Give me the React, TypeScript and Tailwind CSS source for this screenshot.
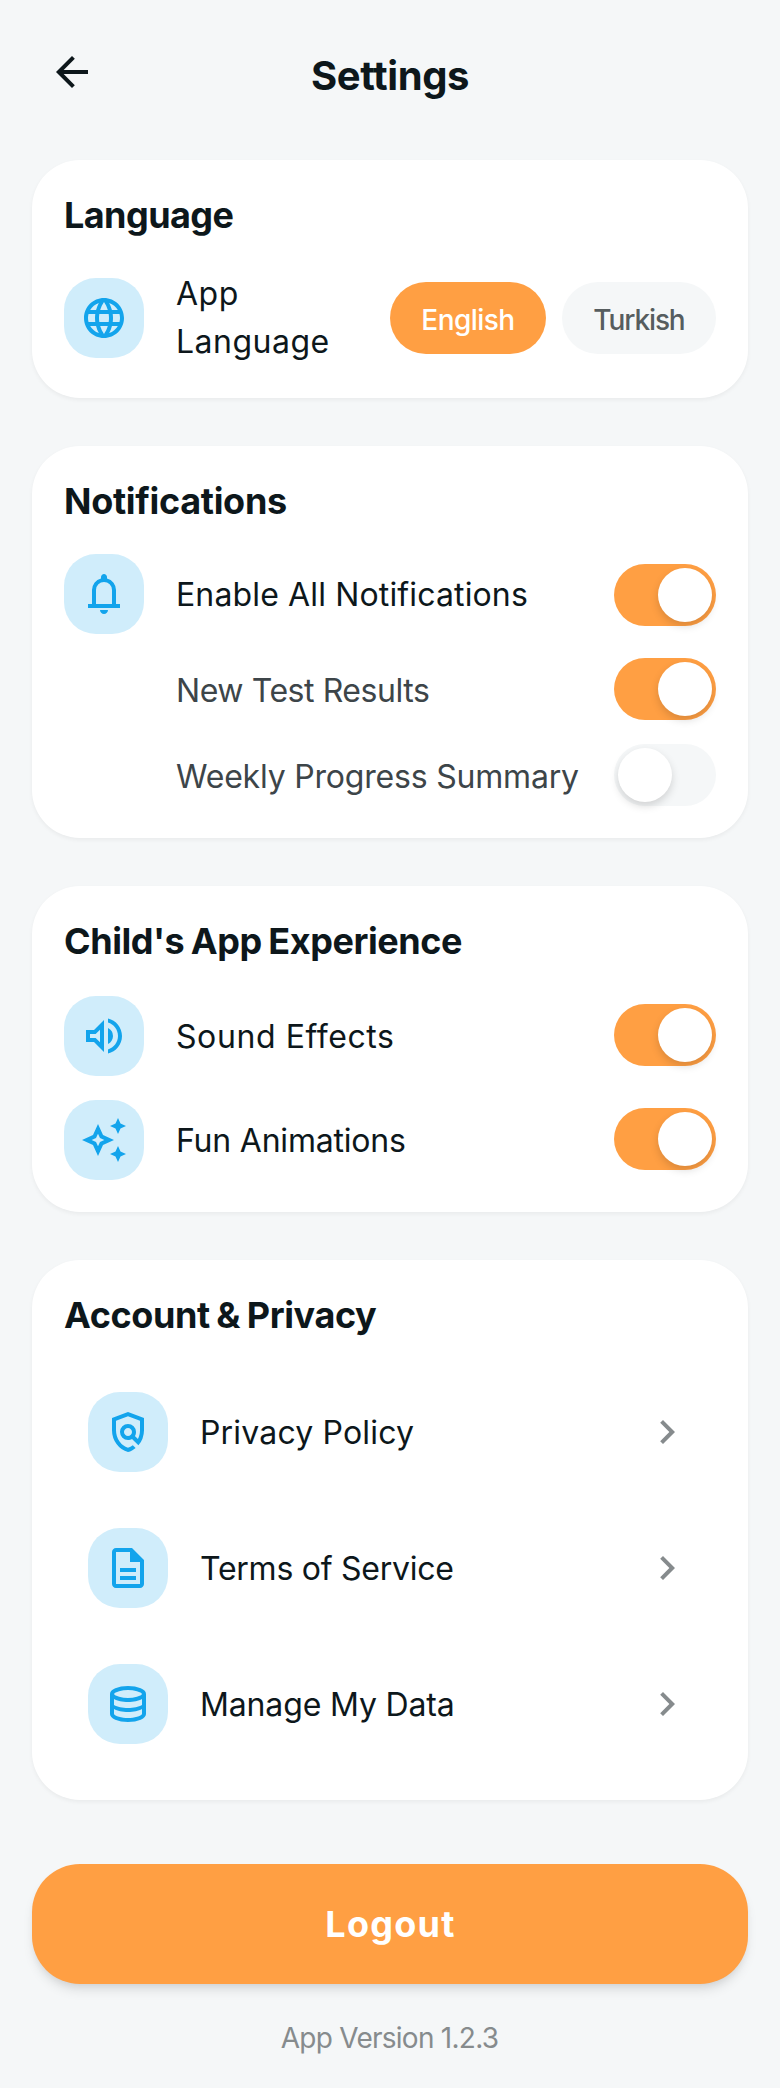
import React, { useState } from "react";
import {
  MdArrowBack,
  MdChevronRight,
  MdLanguage,
  MdOutlineAutoAwesome,
  MdOutlineDescription,
  MdOutlineVolumeUp,
} from "react-icons/md";
import clsx from "clsx";

function SymbolIcon({ d }: { d: string }) {
  return (
    <svg viewBox="0 -960 960 960" className="size-12" fill="currentColor" aria-hidden="true">
      <path d={d} />
    </svg>
  );
}

const BELL =
  "M160-200v-80h80v-280q0-83 50-147.5T420-792v-28q0-25 17.5-42.5T480-880q25 0 42.5 17.5T540-820v28q80 20 130 84.5T720-560v280h80v80H160Zm320-300Zm0 420q-33 0-56.5-23.5T400-160h160q0 33-23.5 56.5T480-80ZM320-280h320v-280q0-66-47-113t-113-47q-66 0-113 47t-47 113v280Z";
const POLICY =
  "M480-80q-139-35-229.5-159.5T160-516v-244l320-120 320 120v244q0 85-29 163.5T688-214L560-342q-18 11-38.5 16.5T480-320q-66 0-113-47t-47-113q0-66 47-113t113-47q66 0 113 47t47 113q0 22-5.5 42.5T618-398l60 60q20-41 31-86t11-92v-189l-240-90-240 90v189q0 121 68 220t172 132q26-8 49.5-20.5T576-214l56 56q-33 27-71.5 47T480-80Zm0-320q33 0 56.5-23.5T560-480q0-33-23.5-56.5T480-560q-33 0-56.5 23.5T400-480q0 33 23.5 56.5T480-400Z";
const DATABASE =
  "M480-120q-151 0-255.5-46.5T120-280v-400q0-66 105.5-113T480-840q149 0 254.5 47T840-680v400q0 67-104.5 113.5T480-120Zm0-479q89 0 179-25.5T760-679q-11-29-100.5-55T480-760q-91 0-178.5 25.5T200-679q14 30 101.5 55T480-599Zm0 199q42 0 81-4t74.5-11.5q35.5-7.5 67-18.5t57.5-25v-120q-26 14-57.5 25t-67 18.5Q600-528 561-524t-81 4q-42 0-82-4t-75.5-11.5Q287-543 256-554t-56-25v120q25 14 56 25t66.5 18.5Q358-408 398-404t82 4Zm0 200q46 0 93.5-7t87.5-18.5q40-11.5 67-26t32-29.5v-98q-26 14-57.5 25t-67 18.5Q600-328 561-324t-81 4q-42 0-82-4t-75.5-11.5Q287-343 256-354t-56-25v99q5 15 31.5 29t66.5 25.5q40 11.5 88 18.5t94 7Z";

function Card({ title, titleClass, children }: { title: string; titleClass: string; children: React.ReactNode }) {
  return (
    <section className="rounded-[48px] bg-white p-8 shadow-[0_2px_4px_rgba(0,0,0,0.05)]">
      <h2 className={clsx("text-4xl leading-[46px] font-bold", titleClass)}>{title}</h2>
      {children}
    </section>
  );
}

function IconTile({ children }: { children: React.ReactNode }) {
  return (
    <span className="flex size-20 shrink-0 items-center justify-center rounded-[32px] bg-[#d0edfb] text-[#13a4ec]">
      {children}
    </span>
  );
}

function Toggle({ initial, label, className }: { initial: boolean; label: string; className?: string }) {
  const [on, setOn] = useState(initial);
  return (
    <button
      type="button"
      role="switch"
      aria-checked={on}
      aria-label={label}
      onClick={() => setOn(!on)}
      className={clsx(
        "flex h-[62px] w-[102px] shrink-0 items-center rounded-full p-1",
        on ? "justify-end bg-[#ff9f43]" : "justify-start bg-[#f5f7f8]",
        className,
      )}
    >
      <span className="size-[54px] rounded-full bg-white shadow-[0_4px_8px_rgba(0,0,0,0.15)]" />
    </button>
  );
}

function Row({ icon, label, labelClass, toggleClass }: { icon: React.ReactNode; label: string; labelClass: string; toggleClass: string }) {
  return (
    <div className="flex h-20 items-center">
      <IconTile>{icon}</IconTile>
      <span className={clsx("ml-8 flex-1 whitespace-nowrap pt-[2px] text-[32px] leading-[48px]", labelClass)}>{label}</span>
      <Toggle initial label={label} className={toggleClass} />
    </div>
  );
}

function SubRow({ label, labelClass, on }: { label: string; labelClass: string; on: boolean }) {
  return (
    <div className="flex h-[62px] items-center pl-28">
      <span className={clsx("flex-1 whitespace-nowrap pt-[3px] text-[32px] leading-[48px] text-[#3d4549]", labelClass)}>
        {label}
      </span>
      <Toggle initial={on} label={label} />
    </div>
  );
}

function LinkRow({ icon, label, labelClass }: { icon: React.ReactNode; label: string; labelClass: string }) {
  return (
    <a href="#" className="flex items-center p-6">
      <IconTile>{icon}</IconTile>
      <span className={clsx("ml-8 flex-1 pt-[2px] text-[32px] leading-[48px]", labelClass)}>{label}</span>
      <MdChevronRight className="mr-px size-12 text-[#868b8d]" />
    </a>
  );
}

export default function App() {
  const [language, setLanguage] = useState("English");
  const pill = (name: string) =>
    clsx(
      "h-[72px] rounded-full pt-[3px] text-center text-[28px] font-medium",
      language === name ? "bg-[#ff9f43] text-white" : "bg-[#f5f7f8] text-[#565d5f]",
    );
  return (
    <div className="min-h-[2088px] bg-[#f5f7f8] px-8 font-['Inter',sans-serif] text-[#0d171b]">
      <header className="flex h-40 items-start pt-8">
        <button type="button" aria-label="Back" className="flex size-20 items-center justify-center">
          <MdArrowBack className="size-12" />
        </button>
        <h1 className="flex-1 pt-[19px] pr-20 text-center text-[40px] leading-[50px] font-bold tracking-[-0.42px]">
          Settings
        </h1>
      </header>

      <main className="flex flex-col gap-12">
        <Card title="Language" titleClass="mb-8 tracking-[-0.57px]">
          <div className="flex items-center">
            <IconTile>
              <MdLanguage className="size-12" />
            </IconTile>
            <span className="ml-8 flex-1 text-[32px] leading-[48px] tracking-[0.5px]">App Language</span>
            <div className="flex gap-4">
              <button type="button" onClick={() => setLanguage("English")} className={clsx(pill("English"), "w-[156px] tracking-[-0.55px]")}>
                English
              </button>
              <button type="button" onClick={() => setLanguage("Turkish")} className={clsx(pill("Turkish"), "w-[154px] tracking-[-1.1px]")}>
                Turkish
              </button>
            </div>
          </div>
        </Card>

        <Card title="Notifications" titleClass="mb-[30px] tracking-[-0.31px]">
          <div className="flex flex-col gap-6">
            <Row icon={<SymbolIcon d={BELL} />} label="Enable All Notifications" labelClass="tracking-[0.14px]" toggleClass="mt-[2px]" />
            <SubRow label="New Test Results" labelClass="tracking-[-0.43px]" on />
            <SubRow label="Weekly Progress Summary" labelClass="tracking-[-0.2px]" on={false} />
          </div>
        </Card>

        <Card title="Child's App Experience" titleClass="mb-8 tracking-[-0.44px] [word-spacing:-1.5px]">
          <div className="flex flex-col gap-6">
            <Row icon={<MdOutlineVolumeUp className="size-12" />} label="Sound Effects" labelClass="tracking-[0.59px]" toggleClass="mb-[2px]" />
            <Row icon={<MdOutlineAutoAwesome className="size-12" />} label="Fun Animations" labelClass="tracking-[-0.21px]" toggleClass="mb-[2px]" />
          </div>
        </Card>

        <Card title="Account & Privacy" titleClass="mb-[30px] tracking-[-0.4px] [word-spacing:-1.5px]">
          <nav className="flex flex-col gap-2">
            <LinkRow icon={<SymbolIcon d={POLICY} />} label="Privacy Policy" labelClass="tracking-[0.17px]" />
            <LinkRow icon={<MdOutlineDescription className="size-12" />} label="Terms of Service" labelClass="tracking-[-0.25px]" />
            <LinkRow icon={<SymbolIcon d={DATABASE} />} label="Manage My Data" labelClass="tracking-[-0.15px]" />
          </nav>
        </Card>
      </main>

      <button
        type="button"
        className="mt-16 block h-[120px] w-full rounded-[48px] bg-[#ff9f43] pl-px text-4xl font-bold tracking-[1.27px] text-white shadow-[0_8px_12px_-2px_rgba(0,0,0,0.1),0_4px_8px_-4px_rgba(0,0,0,0.1)]"
      >
        Logout
      </button>
      <p className="mt-8 pr-px text-center text-[28px] leading-[44px] tracking-[-0.74px] text-[#868b8d]">App Version 1.2.3</p>
    </div>
  );
}
